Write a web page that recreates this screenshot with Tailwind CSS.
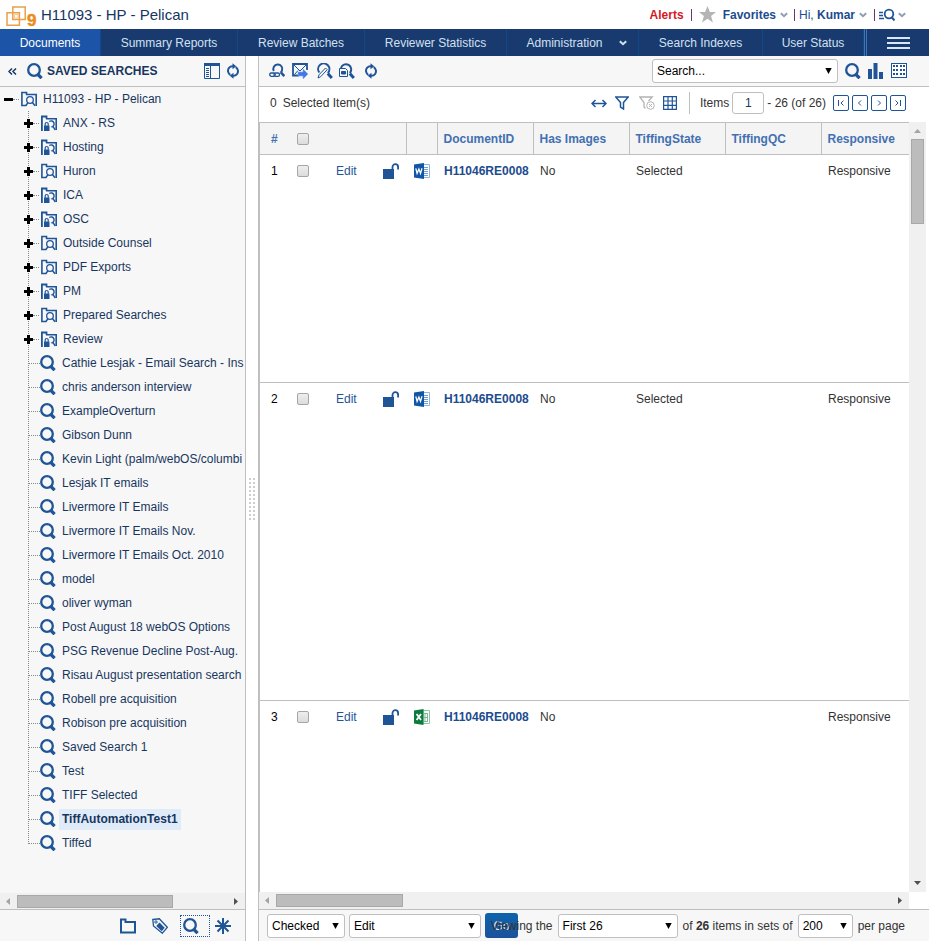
<!DOCTYPE html>
<html lang="en">
<head>
<meta charset="utf-8">
<title>H11093 - HP - Pelican</title>
<script src="https://cdn.jsdelivr.net/npm/@tailwindcss/browser@4"></script>
</head>
<body class="flex min-h-screen flex-col overflow-x-hidden bg-white font-['Liberation_Sans',Arial,sans-serif] text-xs text-[#333]">

<!-- Shared icon symbols -->
<svg class="hidden">
  <symbol id="mag" viewBox="0 0 16 16"><circle cx="7" cy="7" r="5.800" fill="none" stroke="currentColor" stroke-width="2.300"/><path d="M10.400 11 14.600 15.200" stroke="currentColor" stroke-width="3.200"/></symbol>
  <symbol id="folder" viewBox="0 0 16 16"><path d="M5.500 14.500H.9V1.500h4.600v2.300" fill="none" stroke="currentColor" stroke-width="1.600"/><path d="M5 3.500h10.200V15" fill="none" stroke="currentColor" stroke-width="1.600"/><circle cx="9" cy="9" r="3.300" fill="none" stroke="currentColor" stroke-width="1.300"/><path d="m11.200 11.300 2.800 3.500M6.800 11.800 5 14.500" stroke="currentColor" stroke-width="1.500"/></symbol>
  <symbol id="folderlock" viewBox="0 0 16 16"><path d="M.9 16V1.500h4.600v2.300" fill="none" stroke="currentColor" stroke-width="1.800"/><path d="M5 3.800h10.200V15" fill="none" stroke="currentColor" stroke-width="1.600"/><path d="M8.300 6.500a3 3 0 1 1 2 5.400m1.400-.8 2.600 3.900" fill="none" stroke="currentColor" stroke-width="1.400"/><path d="M3 10.500h5.500V16H3z" fill="currentColor"/><path d="M4.200 10.800V9a1.500 1.500 0 0 1 3 0v1.800" fill="none" stroke="currentColor" stroke-width="1.200"/></symbol>
  <symbol id="plus" viewBox="0 0 9 9"><path d="M3 0h3v3h3v3H6v3H3V6H0V3h3z" fill="#000"/></symbol>
  <symbol id="chev" viewBox="0 0 8 6"><path d="m.8 1.200 3.200 3 3.200-3" fill="none" stroke="currentColor" stroke-width="2"/></symbol>
  <symbol id="tri" viewBox="0 0 7 6"><path d="M.3 0h6.400L3.500 6z" fill="#000"/></symbol>
  <symbol id="refresh" viewBox="0 0 12 16"><path d="M3.300 11.800A4.800 4.800 0 0 1 2 4.800 4.600 4.600 0 0 1 6 3.300M8.700 4.200a4.800 4.800 0 0 1 1.300 7 4.600 4.600 0 0 1-4 1.500" fill="none" stroke="currentColor" stroke-width="2"/><path d="M5.500.300v6L9.300 3.300zM6.500 9.700v6L2.700 12.700z" fill="currentColor"/></symbol>
  <symbol id="unlock" viewBox="0 0 16 16"><path d="M0 6h11v10H0z" fill="currentColor"/><path d="M9.500 6.500V4a2.800 2.800 0 0 1 5.600 0v2.500" fill="none" stroke="currentColor" stroke-width="1.800"/></symbol>
  <symbol id="word" viewBox="0 0 16 16"><path d="M9 1.500h6.500v13H9z" fill="#fff" stroke="#8fb4dd"/><path d="M10 4.500h4M10 6.500h4M10 8.500h4M10 10.500h4M10 12.500h4" stroke="#6f9fd4"/><path d="M0 1.500 10 0v16L0 14.500z" fill="#0f56a8"/><path d="m1.800 5.300 1.300 5.200L4.900 6l1.600 4.500L8 5.300" fill="none" stroke="#fff" stroke-width="1.300"/></symbol>
  <symbol id="excel" viewBox="0 0 16 16"><path d="M9 1.500h6.500v13H9z" fill="#fff" stroke="#8ec4a1"/><path d="M11 4v8.500M13.500 4v8.500M10 4.500h4M10 8.500h4M10 12.500h4" stroke="#7dbb95" fill="none"/><path d="M0 1.500 9.500 0v16L0 14.500z" fill="#0c7c3e"/><path d="m2.600 5 4.400 6M7 5l-4.400 6" stroke="#fff" stroke-width="1.800"/></symbol>
</svg>

<header class="flex h-[29px] items-center pr-[23px] pl-[6px] font-bold text-[#1c4c8e]">
  <svg class="mt-1 h-[22px] w-8" viewBox="0 0 32 22" fill="none" stroke="#e9a04a" stroke-width="1.500" aria-hidden="true"><path d="M6.800 1h12.400v12.400H6.800z"/><path d="M1 6.800h12.400v12.400H1z"/><path d="M8.500 8.500h3.500v3.500H8.500z" stroke="#f3c793" stroke-width="1"/><text x="21" y="20" font-size="17" font-weight="bold" fill="#ea8d1d" stroke="#ea8d1d" stroke-width=".5">9</text></svg>
  <h1 class="ml-[3px] text-[15px] font-normal text-[#17365f]">H11093 - HP - Pelican</h1>
  <div class="ml-auto flex items-center">
    <a href="#" class="text-[#d8171f]">Alerts</a>
    <span class="ml-[7px] h-3 w-px bg-[#6c3470]"></span>
    <svg class="ml-[7px] size-[17px]" viewBox="0 0 17 17" aria-hidden="true"><path d="m8.500 0 2.400 6H17l-4.900 4 1.800 6.500-5.400-3.800-5.400 3.800L4.900 10 0 6h6.100z" fill="#b5b5b5"/></svg>
    <a href="#" class="ml-[7px] flex items-center gap-1">Favorites <svg class="h-[6px] w-2 text-[#8fa0b3]"><use href="#chev"/></svg></a>
    <span class="ml-[6px] h-3 w-px bg-[#6c3470]"></span>
    <span class="ml-1 font-normal">Hi,&nbsp;</span><a href="#" class="flex items-center gap-1">Kumar <svg class="h-[6px] w-2 text-[#8fa0b3]"><use href="#chev"/></svg></a>
    <span class="ml-[7px] h-3 w-px bg-[#6c3470]"></span>
    <button aria-label="Search history" class="ml-1 flex items-center gap-[3px]"><svg class="h-[13px] w-4" viewBox="0 0 16 13" fill="none" stroke="#1f5597"><path d="M0 4.500h4M0 7.500h4M0 10.500h5" stroke-width="1.500"/><circle cx="10" cy="6" r="4.300" stroke-width="1.800"/><path d="m12.500 9 3 3.500" stroke-width="2"/></svg><svg class="h-[6px] w-2 text-[#8fa0b3]"><use href="#chev"/></svg></button>
  </div>
</header>

<nav class="grid h-[27px] grid-cols-[101fr_137fr_127fr_142fr_132fr_124fr_101fr_65fr] bg-[#183a6f] text-[#d3e0f0] [&>a]:flex [&>a]:items-center [&>a]:justify-center [&>a]:border-r [&>a]:border-[#12498a]">
  <a href="#" class="bg-[#1c54a8] text-white">Documents</a>
  <a href="#">Summary Reports</a>
  <a href="#">Review Batches</a>
  <a href="#">Reviewer Statistics</a>
  <a href="#" class="gap-4 pl-2">Administration <svg class="h-[6px] w-2"><use href="#chev"/></svg></a>
  <a href="#">Search Indexes</a>
  <a href="#">User Status</a>
  <button aria-label="Menu" class="flex items-center justify-center border-l-[3px] border-double border-[#3f74b8]"><svg class="h-3 w-[23px]" viewBox="0 0 23 12"><path d="M0 1h23M0 6h23M0 11h23" stroke="#d9e6f5" stroke-width="2"/></svg></button>
</nav>

<div class="flex flex-1">
  <!-- Saved searches -->
  <aside class="flex w-[246px] shrink-0 flex-col border-r border-[#bfbfbf] bg-[#f7f7f7] text-[#17365f]">
    <div class="flex h-[31px] shrink-0 items-center border-b border-[#bfbfbf] pr-[6px] pl-2 text-[#1f5597]">
      <button aria-label="Collapse panel"><svg class="h-[7px] w-[9px]" viewBox="0 0 9 7"><path d="M4 .5 1 3.500l3 3M8 .5 5 3.500l3 3" fill="none" stroke="#17365f" stroke-width="1.500"/></svg></button>
      <svg class="ml-[10px] size-4" aria-hidden="true"><use href="#mag"/></svg>
      <h2 class="ml-1 font-bold text-[#17365f]">SAVED SEARCHES</h2>
      <button aria-label="Layout" class="ml-auto"><svg class="size-4" viewBox="0 0 16 16" fill="none" stroke="currentColor"><path d="M.5.500h15v15H.5z"/><path d="M0 1.500h16" stroke-width="3"/><path d="M6.500 2v13M2 5.500h3M2 7.500h3M2 9.500h3M2 11.500h3M2 13.500h3"/></svg></button>
      <button aria-label="Refresh" class="ml-[7px]"><svg class="h-4 w-3"><use href="#refresh"/></svg></button>
    </div>

    <div class="flex-1 overflow-hidden whitespace-nowrap">
      <div class="flex h-6 items-center">
        <button aria-label="Collapse folder" class="ml-1 h-[3px] w-[9px] bg-black"></button>
        <span class="w-[6px] border-t border-dotted border-[#888]"></span>
        <svg class="ml-[2px] size-4 text-[#1f5597]"><use href="#folder"/></svg>
        <a href="#" class="ml-[6px]">H11093 - HP - Pelican</a>
      </div>
      <ul class="ml-7 bg-[repeating-linear-gradient(#888_0_1px,transparent_1px_2px)] bg-[length:1px_calc(100%-12px)] bg-no-repeat [&_a]:ml-[3px] [&_a]:px-[3px] [&_a]:leading-[21px] [&_button]:-ml-1 [&_button]:size-[9px] [&_button>svg]:size-[9px] [&>li]:flex [&>li]:h-6 [&>li]:items-center [&>li>span]:shrink-0 [&>li>span]:border-t [&>li>span]:border-dotted [&>li>span]:border-[#888] [&>li>svg]:size-4 [&>li>svg]:shrink-0 [&>li>svg]:text-[#1f5597]">
        <li><button aria-label="Expand ANX - RS"><svg><use href="#plus"/></svg></button><span class="mr-[2px] w-[6px]"></span><svg><use href="#folderlock"/></svg><a href="#">ANX - RS</a></li>
        <li><button aria-label="Expand Hosting"><svg><use href="#plus"/></svg></button><span class="mr-[2px] w-[6px]"></span><svg><use href="#folderlock"/></svg><a href="#">Hosting</a></li>
        <li><button aria-label="Expand Huron"><svg><use href="#plus"/></svg></button><span class="mr-[2px] w-[6px]"></span><svg><use href="#folder"/></svg><a href="#">Huron</a></li>
        <li><button aria-label="Expand ICA"><svg><use href="#plus"/></svg></button><span class="mr-[2px] w-[6px]"></span><svg><use href="#folderlock"/></svg><a href="#">ICA</a></li>
        <li><button aria-label="Expand OSC"><svg><use href="#plus"/></svg></button><span class="mr-[2px] w-[6px]"></span><svg><use href="#folderlock"/></svg><a href="#">OSC</a></li>
        <li><button aria-label="Expand Outside Counsel"><svg><use href="#plus"/></svg></button><span class="mr-[2px] w-[6px]"></span><svg><use href="#folder"/></svg><a href="#">Outside Counsel</a></li>
        <li><button aria-label="Expand PDF Exports"><svg><use href="#plus"/></svg></button><span class="mr-[2px] w-[6px]"></span><svg><use href="#folder"/></svg><a href="#">PDF Exports</a></li>
        <li><button aria-label="Expand PM"><svg><use href="#plus"/></svg></button><span class="mr-[2px] w-[6px]"></span><svg><use href="#folderlock"/></svg><a href="#">PM</a></li>
        <li><button aria-label="Expand Prepared Searches"><svg><use href="#plus"/></svg></button><span class="mr-[2px] w-[6px]"></span><svg><use href="#folder"/></svg><a href="#">Prepared Searches</a></li>
        <li><button aria-label="Expand Review"><svg><use href="#plus"/></svg></button><span class="mr-[2px] w-[6px]"></span><svg><use href="#folderlock"/></svg><a href="#">Review</a></li>
        <li><span class="w-3"></span><svg><use href="#mag"/></svg><a href="#">Cathie Lesjak - Email Search - Ins</a></li>
        <li><span class="w-3"></span><svg><use href="#mag"/></svg><a href="#">chris anderson interview</a></li>
        <li><span class="w-3"></span><svg><use href="#mag"/></svg><a href="#">ExampleOverturn</a></li>
        <li><span class="w-3"></span><svg><use href="#mag"/></svg><a href="#">Gibson Dunn</a></li>
        <li><span class="w-3"></span><svg><use href="#mag"/></svg><a href="#">Kevin Light (palm/webOS/columbi</a></li>
        <li><span class="w-3"></span><svg><use href="#mag"/></svg><a href="#">Lesjak IT emails</a></li>
        <li><span class="w-3"></span><svg><use href="#mag"/></svg><a href="#">Livermore IT Emails</a></li>
        <li><span class="w-3"></span><svg><use href="#mag"/></svg><a href="#">Livermore IT Emails Nov.</a></li>
        <li><span class="w-3"></span><svg><use href="#mag"/></svg><a href="#">Livermore IT Emails Oct. 2010</a></li>
        <li><span class="w-3"></span><svg><use href="#mag"/></svg><a href="#">model</a></li>
        <li><span class="w-3"></span><svg><use href="#mag"/></svg><a href="#">oliver wyman</a></li>
        <li><span class="w-3"></span><svg><use href="#mag"/></svg><a href="#">Post August 18 webOS Options</a></li>
        <li><span class="w-3"></span><svg><use href="#mag"/></svg><a href="#">PSG Revenue Decline Post-Aug.</a></li>
        <li><span class="w-3"></span><svg><use href="#mag"/></svg><a href="#">Risau August presentation search</a></li>
        <li><span class="w-3"></span><svg><use href="#mag"/></svg><a href="#">Robell pre acquisition</a></li>
        <li><span class="w-3"></span><svg><use href="#mag"/></svg><a href="#">Robison pre acquisition</a></li>
        <li><span class="w-3"></span><svg><use href="#mag"/></svg><a href="#">Saved Search 1</a></li>
        <li><span class="w-3"></span><svg><use href="#mag"/></svg><a href="#">Test</a></li>
        <li><span class="w-3"></span><svg><use href="#mag"/></svg><a href="#">TIFF Selected</a></li>
        <li><span class="w-3"></span><svg><use href="#mag"/></svg><a href="#" class="bg-[#dfebf9] font-bold">TiffAutomationTest1</a></li>
        <li><span class="w-3"></span><svg><use href="#mag"/></svg><a href="#">Tiffed</a></li>
      </ul>
    </div>

    <div class="flex h-4 shrink-0 items-center bg-[#f0f0f0]">
      <svg class="ml-[6px] h-[7px] w-1" viewBox="0 0 4 7"><path d="M4 0v7L0 3.500z" fill="#a3a3a3"/></svg>
      <div class="mr-auto ml-[7px] h-[13px] w-[156px] border border-[#a8a8a8] bg-[#bcbcbc]"></div>
      <svg class="mr-[7px] h-[7px] w-1" viewBox="0 0 4 7"><path d="M0 0v7l4-3.500z" fill="#505050"/></svg>
    </div>

    <div class="flex h-8 shrink-0 items-center justify-end border-t border-[#bfbfbf] pr-[14px] text-[#1f5597]">
      <button aria-label="Folders"><svg class="size-4" viewBox="0 0 16 16"><path d="M1 1.500h4.500V4H15v10.500H1z" fill="none" stroke="currentColor" stroke-width="2"/></svg></button>
      <button aria-label="Tags" class="ml-4"><svg class="size-4" viewBox="0 0 16 16"><path d="m.8 1.500 6.500-.7 8 8.500-5 5.900L1.500 8z" fill="none" stroke="currentColor" stroke-width="1.300"/><path d="m7.500 4.500 5.200 5.200-3 3.500-5.400-5.200z" fill="currentColor"/><circle cx="4" cy="4" r="1.200" fill="none" stroke="currentColor"/></svg></button>
      <button aria-label="Searches" class="ml-3 h-[22px] w-[30px] border border-dotted border-[#1f5597] pl-[2px]"><svg class="size-4"><use href="#mag"/></svg></button>
      <button aria-label="More" class="ml-[5px]"><svg class="size-4" viewBox="0 0 16 16" stroke="currentColor" stroke-width="2"><path d="M8 0v16M0 8h16M2.500 2.500l11 11M13.500 2.500l-11 11"/></svg></button>
    </div>
  </aside>

  <div class="flex w-3 shrink-0 items-center justify-center">
    <svg class="h-[42px] w-[6px]" viewBox="0 0 6 42" fill="none"><path d="M1 0v42M5 0v42" stroke="#cdcdcd" stroke-width="2" stroke-dasharray="2 2"/></svg>
  </div>

  <main class="flex min-w-0 flex-1 flex-col border-l border-[#bfbfbf]">
    <div class="flex h-[31px] shrink-0 items-center border-b border-[#bfbfbf] bg-[#f7f7f7] pr-[22px] pl-[10px] text-[#1f5597]">
      <button aria-label="Linked search"><svg class="size-4" viewBox="0 0 16 16" fill="none" stroke="currentColor"><path d="M4.800 8A4.500 4.500 0 1 1 13 7.500c-.3 1-.8 1.700-1.500 2.200" stroke-width="2"/><path d="m12 9.500 3.300 3.700" stroke-width="2.600"/><rect x=".7" y="10" width="5.500" height="3.300" rx="1.600" stroke-width="1.300"/><rect x="5" y="10" width="5.500" height="3.300" rx="1.600" stroke-width="1.300"/></svg></button>
      <button aria-label="Send" class="ml-[7px]"><svg class="size-4" viewBox="0 0 16 16" fill="none"><path d="M7 12.500H1V1h14v6" stroke="#1f5597" stroke-width="1.800"/><path d="m2 2 6 6 6-6M2.500 11.500l3.500-4" stroke="#1f5597"/><path d="M6 9h5V6l5 5-5 5v-3H6z" fill="#4377e8" stroke="#86a8f4" stroke-width=".6"/></svg></button>
      <button aria-label="Edit search" class="ml-[9px]"><svg class="size-4" viewBox="0 0 16 16" fill="none" stroke="currentColor"><path d="M2.300 9.500a5.600 5.600 0 1 1 8.500.5" stroke-width="2"/><path d="m10.800 10.500 4 4.500" stroke-width="3"/><path d="m1 15 1-3.200L8.500 5l1.700 1.700-6.500 7z" stroke-width="1"/></svg></button>
      <button aria-label="Search documents" class="ml-[6px]"><svg class="size-4" viewBox="0 0 16 16" fill="none" stroke="currentColor"><path d="M2 5a5.200 5.200 0 1 1 8.800 5" stroke-width="2"/><path d="m10.800 10.500 4 4.500" stroke-width="3"/><path d="M.5 5.500h6l2 2v6h-8z"/><path d="M2.500 8.500h4V11h-4z" fill="currentColor"/></svg></button>
      <button aria-label="Refresh list" class="ml-[10px]"><svg class="h-4 w-3"><use href="#refresh"/></svg></button>
      <span class="relative mr-[7px] ml-auto flex items-center">
        <select aria-label="Search" class="h-6 w-[186px] appearance-none rounded-[3px] border border-[#bfbfbf] bg-white px-1 text-black"><option>Search...</option></select>
        <svg class="pointer-events-none absolute right-[6px] h-[6px] w-[7px]"><use href="#tri"/></svg>
      </span>
      <button aria-label="Run search"><svg class="size-4"><use href="#mag"/></svg></button>
      <button aria-label="Charts" class="ml-[7px]"><svg class="size-4" viewBox="0 0 16 16" fill="currentColor"><path d="M0 6h4v10H0zM5.500 0h4v16h-4zM11 9h4v7h-4z"/></svg></button>
      <button aria-label="Grid view" class="ml-[7px]"><svg class="size-4" viewBox="0 0 16 16" shape-rendering="crispEdges"><path d="M.5.500h15v14H.5z" fill="#fff" stroke="#1f5597"/><path d="M2 3h12" stroke="#1f5597" stroke-width="2" stroke-dasharray="2 1 2 2 2 1 2"/><path d="M2 7h12M2 11h12" stroke="#1f5597" stroke-width="2" stroke-dasharray="2 1.333"/></svg></button>
    </div>

    <div class="flex h-[35px] shrink-0 items-center pr-[23px] pb-1 pl-[11px]">
      <span><span class="mr-[6px]">0</span>Selected Item(s)</span>
      <div class="ml-auto flex items-center text-[#1f5597]">
        <button aria-label="Fit width"><svg class="mt-[2px] h-[9px] w-4" viewBox="0 0 16 9"><path d="M1 4.500h14M4.500 1 1 4.500 4.500 8M11.500 1 15 4.500 11.500 8" fill="none" stroke="currentColor" stroke-width="1.500"/></svg></button>
        <button aria-label="Filter" class="ml-2"><svg class="h-[14px] w-[14px]" viewBox="0 0 14 14"><path d="M.8 1h12.400L8.500 6.500V13l-3-2V6.500z" fill="none" stroke="currentColor" stroke-width="1.500"/></svg></button>
        <button aria-label="Clear filter" class="ml-[10px]"><svg class="h-[14px] w-4" viewBox="0 0 16 14" fill="none" stroke="#b3b3b3"><path d="M6.500 12.500 5 11V6.500L.8 1h12.400L9.500 5" stroke-width="1.300"/><circle cx="11.500" cy="9.500" r="3.800"/><path d="m10 8 3 3m0-3-3 3"/></svg></button>
        <button aria-label="Columns" class="ml-2"><svg class="h-[14px] w-[14px]" viewBox="0 0 14 14"><path d="M.6.600h12.800v12.800H.6zM5 0v14M9.300 0v14M0 5h14M0 9.300h14" fill="none" stroke="currentColor" stroke-width="1.200"/></svg></button>
        <span class="ml-3 h-[22px] w-px bg-[#bfbfbf]"></span>
        <label for="page" class="ml-[10px] text-[#333]">Items</label>
        <input id="page" value="1" class="ml-[3px] h-[22px] w-8 rounded-[3px] border border-[#bfbfbf] bg-white text-center text-[#17365f]">
        <span class="mr-[7px] ml-[3px] text-[#333]">- 26 (of 26)</span>
        <div class="flex gap-[3px] [&_path]:fill-none [&_path]:stroke-current [&_svg]:h-[6px] [&_svg]:w-2 [&>button]:flex [&>button]:size-4 [&>button]:items-center [&>button]:justify-center [&>button]:rounded-[2px] [&>button]:border [&>button]:border-[#1f5597]">
          <button aria-label="First page"><svg viewBox="0 0 8 6"><path d="M1.500 0v6M6.500.5 4 3l2.500 2.500"/></svg></button>
          <button aria-label="Previous page"><svg viewBox="0 0 8 6"><path d="M5 .5 2.500 3 5 5.500"/></svg></button>
          <button aria-label="Next page"><svg viewBox="0 0 8 6"><path d="M3 .5 5.500 3 3 5.500"/></svg></button>
          <button aria-label="Last page"><svg viewBox="0 0 8 6"><path d="M6.500 0v6M1.500.5 4 3 1.500 5.500"/></svg></button>
        </div>
      </div>
    </div>

    <div class="flex flex-1 pr-[3px]">
      <div class="flex min-w-0 flex-1 flex-col">
        <div class="flex-1 overflow-hidden border-l border-[#bfbfbf]">
          <table class="w-full table-fixed border-collapse text-left whitespace-nowrap [&_input]:block [&_input]:size-3 [&_input]:appearance-none [&_input]:rounded-[2px] [&_input]:border [&_input]:border-[#a6a6a6] [&_input]:bg-linear-to-b [&_input]:from-[#eee] [&_input]:to-[#dcdcdc] [&_td]:p-0 [&_td]:pt-2 [&_td]:align-top [&_td]:leading-4 [&_td>svg]:size-4 [&_th]:border-[#bfbfbf] [&_th]:p-0">
            <colgroup><col class="w-[37px]"><col class="w-[39px]"><col class="w-[47px]"><col class="w-[23px]"><col class="w-[31px]"><col class="w-[96px]"><col class="w-[96px]"><col class="w-[96px]"><col class="w-[96px]"><col></colgroup>
            <thead class="border-y border-[#bfbfbf] bg-[#f4f4f4] text-[#4270b2]">
              <tr class="h-8">
                <th><span class="ml-[11px]">#</span></th>
                <th><input type="checkbox" aria-label="Select all"></th>
                <th></th>
                <th class="border-r"></th>
                <th class="border-r"></th>
                <th class="border-r"><span class="ml-[6px]">DocumentID</span></th>
                <th class="border-r"><span class="ml-[6px]">Has Images</span></th>
                <th class="border-r"><span class="ml-[6px]">TiffingState</span></th>
                <th class="border-r"><span class="ml-[6px]">TiffingQC</span></th>
                <th><span class="ml-[6px]">Responsive</span></th>
              </tr>
            </thead>
            <tbody>
              <tr class="h-[228px] border-b border-[#bfbfbf]">
                <td><span class="ml-[11px] text-black">1</span></td>
                <td><input type="checkbox" aria-label="Select item 1" class="mt-[2px]"></td>
                <td><a href="#" class="text-[#1f5597]">Edit</a></td>
                <td class="text-[#1f5597]"><svg><use href="#unlock"/></svg></td>
                <td><svg class="ml-2"><use href="#word"/></svg></td>
                <td><a href="#" class="ml-[7px] font-bold text-[#1c4c8e]">H11046RE0008</a></td>
                <td><span class="ml-[7px]">No</span></td>
                <td><span class="ml-[7px]">Selected</span></td>
                <td></td>
                <td><span class="ml-[7px]">Responsive</span></td>
              </tr>
              <tr class="h-[318px] border-b border-[#bfbfbf]">
                <td><span class="ml-[11px] text-black">2</span></td>
                <td><input type="checkbox" aria-label="Select item 2" class="mt-[2px]"></td>
                <td><a href="#" class="text-[#1f5597]">Edit</a></td>
                <td class="text-[#1f5597]"><svg><use href="#unlock"/></svg></td>
                <td><svg class="ml-2"><use href="#word"/></svg></td>
                <td><a href="#" class="ml-[7px] font-bold text-[#1c4c8e]">H11046RE0008</a></td>
                <td><span class="ml-[7px]">No</span></td>
                <td><span class="ml-[7px]">Selected</span></td>
                <td></td>
                <td><span class="ml-[7px]">Responsive</span></td>
              </tr>
              <tr>
                <td><span class="ml-[11px] text-black">3</span></td>
                <td><input type="checkbox" aria-label="Select item 3" class="mt-[2px]"></td>
                <td><a href="#" class="text-[#1f5597]">Edit</a></td>
                <td class="text-[#1f5597]"><svg><use href="#unlock"/></svg></td>
                <td><svg class="ml-2"><use href="#excel"/></svg></td>
                <td><a href="#" class="ml-[7px] font-bold text-[#1c4c8e]">H11046RE0008</a></td>
                <td><span class="ml-[7px]">No</span></td>
                <td></td>
                <td></td>
                <td><span class="ml-[7px]">Responsive</span></td>
              </tr>
            </tbody>
          </table>
        </div>
        <div class="flex h-[17px] items-center bg-[#f0f0f0]">
          <svg class="ml-[6px] h-[7px] w-1" viewBox="0 0 4 7"><path d="M4 0v7L0 3.500z" fill="#a3a3a3"/></svg>
          <div class="mr-auto ml-[7px] h-[13px] w-[127px] border border-[#a8a8a8] bg-[#bcbcbc]"></div>
          <svg class="mr-[7px] h-[7px] w-1" viewBox="0 0 4 7"><path d="M0 0v7l4-3.500z" fill="#505050"/></svg>
        </div>
      </div>
      <div class="mb-[17px] flex w-[17px] flex-col items-center bg-[#f0f0f0]">
        <svg class="mt-[7px] h-1 w-[7px]" viewBox="0 0 7 4"><path d="M0 4h7L3.500 0z" fill="#a3a3a3"/></svg>
        <div class="mt-[6px] mb-auto h-[85px] w-[13px] border border-[#a8a8a8] bg-[#bcbcbc]"></div>
        <svg class="mb-[7px] h-1 w-[7px]" viewBox="0 0 7 4"><path d="M0 0h7L3.500 4z" fill="#505050"/></svg>
      </div>
    </div>

    <div class="flex h-8 shrink-0 items-center border-t border-[#bfbfbf] bg-[#f7f7f7] pr-6 pl-2 whitespace-nowrap [&_select]:h-6 [&_select]:appearance-none [&_select]:rounded-[3px] [&_select]:border [&_select]:border-[#bfbfbf] [&_select]:bg-white [&_select]:px-1 [&_select]:text-black">
      <span class="relative flex items-center"><select aria-label="Scope" class="w-[78px]"><option>Checked</option></select><svg class="pointer-events-none absolute right-[6px] h-[6px] w-[7px]"><use href="#tri"/></svg></span>
      <span class="relative ml-1 flex items-center"><select aria-label="Action" class="w-[132px]"><option>Edit</option></select><svg class="pointer-events-none absolute right-[6px] h-[6px] w-[7px]"><use href="#tri"/></svg></span>
      <button class="ml-1 h-[25px] w-[33px] rounded-[3px] bg-linear-to-b from-[#0d63ae] to-[#1a529a] text-[#dce8f5]">Go</button>
      <div class="pointer-events-none relative -ml-7 flex flex-1 items-center justify-end gap-[5px] [&_select]:pointer-events-auto">
        <span>Viewing the</span>
        <span class="relative flex items-center"><select aria-label="Item range" class="w-[120px]"><option>First 26</option></select><svg class="absolute right-[6px] h-[6px] w-[7px]"><use href="#tri"/></svg></span>
        <span>of <b>26</b> items in sets of</span>
        <span class="relative flex items-center"><select aria-label="Page size" class="w-[55px]"><option>200</option></select><svg class="absolute right-[6px] h-[6px] w-[7px]"><use href="#tri"/></svg></span>
        <span>per page</span>
      </div>
    </div>
  </main>
</div>
</body>
</html>
